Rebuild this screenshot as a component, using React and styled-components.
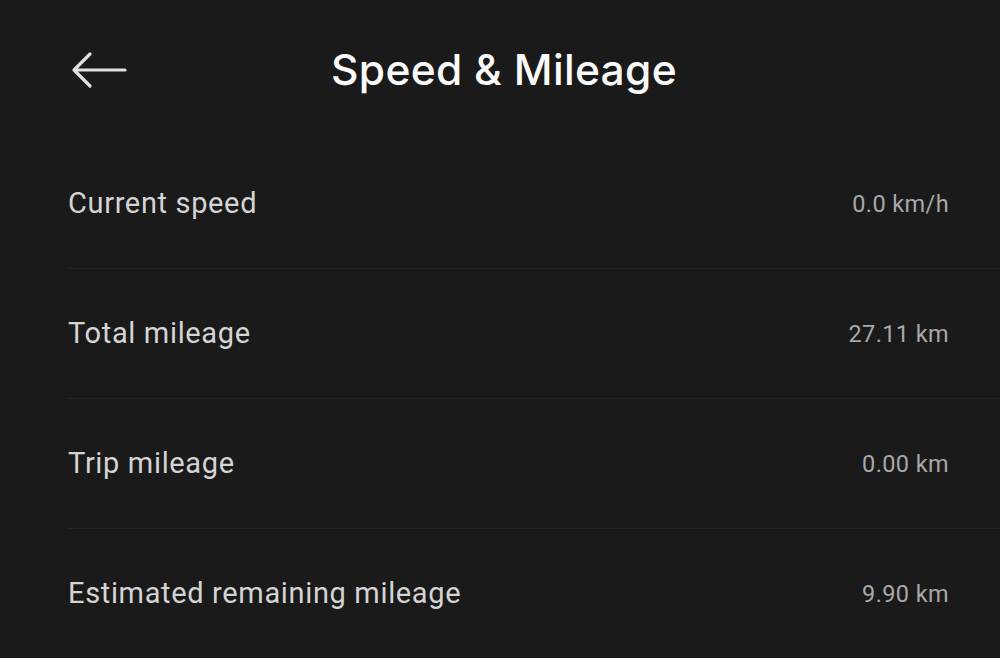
import React from "react";
import styled, { createGlobalStyle } from "styled-components";

const GlobalStyle = createGlobalStyle`
  html, body {
    margin: 0;
    padding: 0;
    background: #1a1a1a;
  }
  body {
    font-family: Roboto, "Liberation Sans", sans-serif;
  }
`;

const Page = styled.div`
  width: 1000px;
  height: 658px;
  background: #1a1a1a;
  overflow: hidden;
`;

const Header = styled.div`
  height: 139px;
  display: grid;
  grid-template-columns: 160px 1fr 160px;
  align-items: center;
`;

const BackButton = styled.div`
  display: flex;
  align-items: center;
  padding-left: 70px;
  height: 100%;
  cursor: pointer;
`;

const Title = styled.h1`
  margin: 0;
  text-align: center;
  font-family: Inter, "Noto Sans", sans-serif;
  font-size: 42.5px;
  font-weight: 500;
  color: #fafafa;
  letter-spacing: 0.3px;
  padding-left: 8px;
`;

const List = styled.div`
  display: flex;
  flex-direction: column;
  padding-left: 68px;
`;

const Row = styled.div`
  height: 129px;
  display: flex;
  align-items: center;
  justify-content: space-between;
  padding-right: 51px;
  border-bottom: ${(p) => (p.$last ? "none" : "1px solid #252525")};
`;

const Label = styled.span`
  font-size: 29px;
  font-weight: 400;
  color: #d4d4d4;
  letter-spacing: 0.65px;
  margin-top: -1px;
`;

const Value = styled.span`
  font-size: 23.5px;
  font-weight: 400;
  color: #a8a8a8;
  letter-spacing: 0.4px;
`;

const rows = [
  { label: "Current speed", value: "0.0 km/h" },
  { label: "Total mileage", value: "27.11 km" },
  { label: "Trip mileage", value: "0.00 km" },
  { label: "Estimated remaining mileage", value: "9.90 km" },
];

const BackArrow = () => (
  <svg width="58" height="40" viewBox="0 0 58 40" fill="none">
    <path
      d="M55 20H4M20 4L4 20L20 36"
      stroke="#e0e0e0"
      strokeWidth="3.2"
      strokeLinecap="round"
      strokeLinejoin="round"
    />
  </svg>
);

export default function App() {
  return (
    <Page>
      <GlobalStyle />
      <Header>
        <BackButton>
          <BackArrow />
        </BackButton>
        <Title>Speed &amp; Mileage</Title>
        <div />
      </Header>
      <List>
        {rows.map((r, i) => (
          <Row key={r.label} $last={i === rows.length - 1}>
            <Label>{r.label}</Label>
            <Value>{r.value}</Value>
          </Row>
        ))}
      </List>
    </Page>
  );
}
